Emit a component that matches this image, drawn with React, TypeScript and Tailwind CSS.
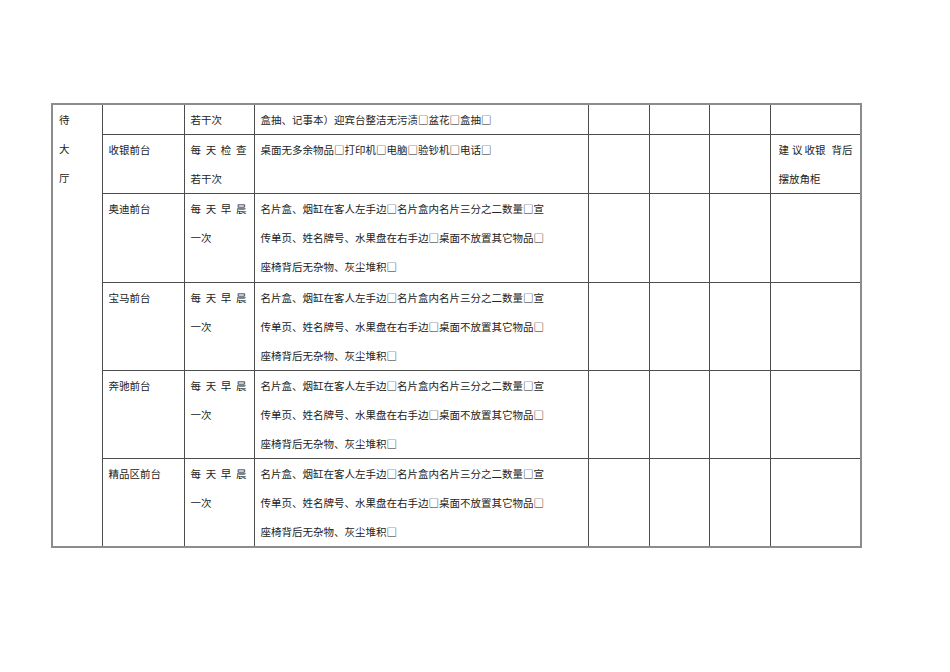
const font = { fontFamily: '"Noto Sans CJK SC", "Noto Sans", sans-serif' };

const line = 'h-[29px] leading-[29px] whitespace-nowrap';
const cell = 'border border-[#4d4d4d] align-top p-0 pl-[6px]';

const Spread = ({ chars }: { chars: string[] }) => (
  <div className={`${line} flex justify-between w-[56px]`}>
    {chars.map((c, i) => (
      <span key={i}>{c}</span>
    ))}
  </div>
);

const counters = [
  { name: '奥迪前台', h: 'h-[88.5px]' },
  { name: '宝马前台', h: 'h-[87.5px]' },
  { name: '奔驰前台', h: 'h-[88.5px]' },
  { name: '精品区前台', h: 'h-[86.5px]' },
];

const Empties = () => (
  <>
    <td className={cell}></td>
    <td className={cell}></td>
    <td className={cell}></td>
  </>
);

export default function App() {
  return (
    <div className="min-h-screen w-full bg-white pt-[103px] pl-[51px]" style={font}>
      <table className="table-fixed border-collapse w-[809px] text-[10.5px] text-[#222] border-2 border-[#8c8c8c]">
        <colgroup>
          <col className="w-[50px]" />
          <col className="w-[82px]" />
          <col className="w-[70px]" />
          <col className="w-[334px]" />
          <col className="w-[61px]" />
          <col className="w-[60px]" />
          <col className="w-[61px]" />
          <col className="w-[91px]" />
        </colgroup>
        <tbody>
          <tr className="h-[29.5px]">
            <td className={cell} rowSpan={6}>
              <div className={line}>待</div>
              <div className={line}>大</div>
              <div className={line}>厅</div>
            </td>
            <td className={cell}></td>
            <td className={cell}>
              <div className={line}>若干次</div>
            </td>
            <td className={cell}>
              <div className={line}>盒抽、记事本）迎宾台整洁无污渍□盆花□盒抽□</div>
            </td>
            <Empties />
            <td className={cell}></td>
          </tr>
          <tr className="h-[58.5px]">
            <td className={cell}>
              <div className={line}>收银前台</div>
            </td>
            <td className={cell}>
              <Spread chars={['每', '天', '检', '查']} />
              <div className={line}>若干次</div>
            </td>
            <td className={cell}>
              <div className={line}>桌面无多余物品□打印机□电脑□验钞机□电话□</div>
            </td>
            <Empties />
            <td className={`${cell} pl-[8px]`}>
              <div className={line}>
                建<span className="ml-[3px]">议</span>
                <span className="ml-[2px]">收银</span>
                <span className="ml-[6px]">背后</span>
              </div>
              <div className={line}>摆放角柜</div>
            </td>
          </tr>
          {counters.map((c) => (
            <tr key={c.name} className={c.h}>
              <td className={cell}>
                <div className={line}>{c.name}</div>
              </td>
              <td className={cell}>
                <Spread chars={['每', '天', '早', '晨']} />
                <div className={line}>一次</div>
              </td>
              <td className={cell}>
                <div className={line}>名片盒、烟缸在客人左手边□名片盒内名片三分之二数量□宣</div>
                <div className={line}>传单页、姓名牌号、水果盘在右手边□桌面不放置其它物品□</div>
                <div className={line}>座椅背后无杂物、灰尘堆积□</div>
              </td>
              <Empties />
              <td className={cell}></td>
            </tr>
          ))}
        </tbody>
      </table>
    </div>
  );
}
